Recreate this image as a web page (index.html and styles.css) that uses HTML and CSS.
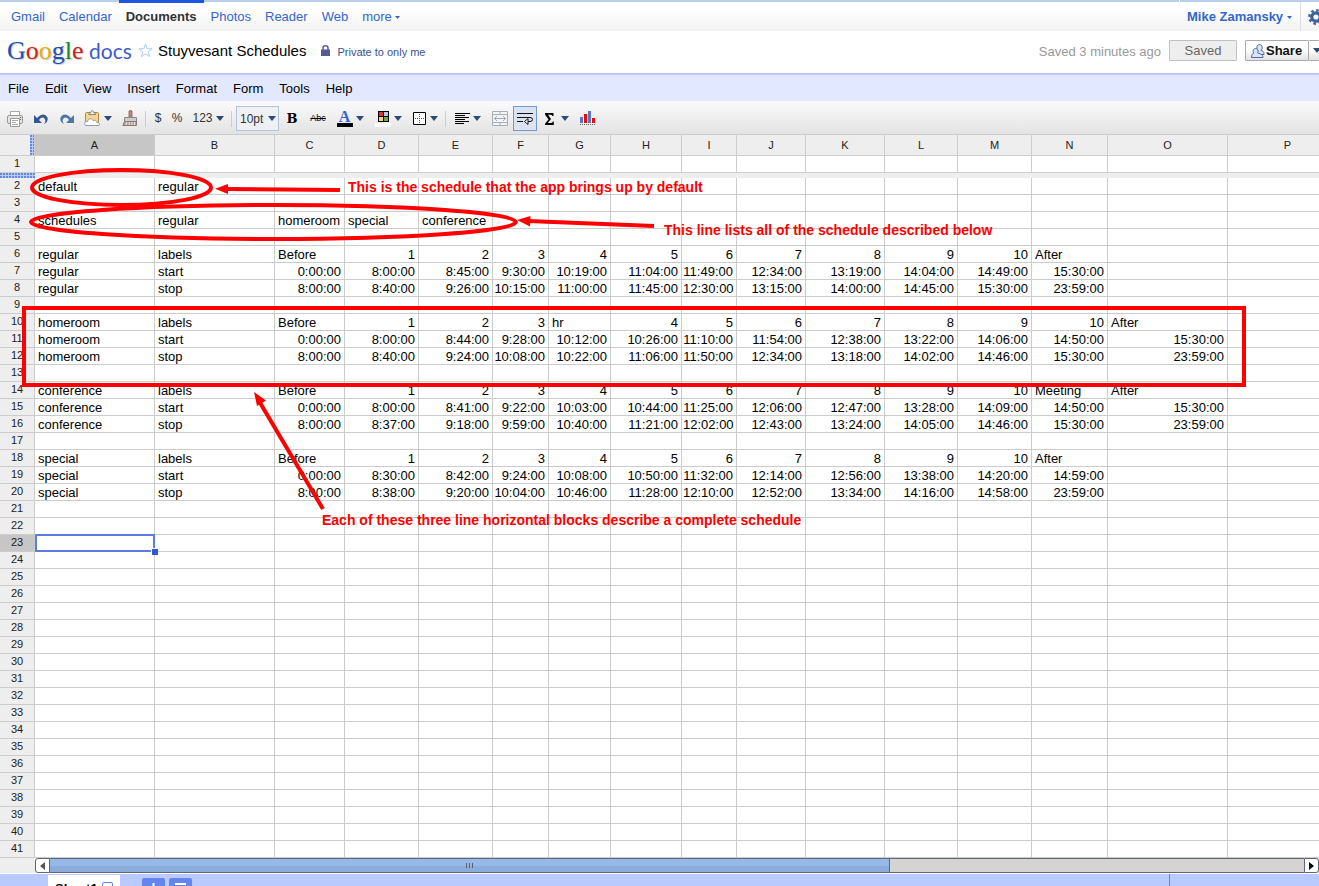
FILE: index.html
```html
<!DOCTYPE html>
<html lang="en">
<head>
<meta charset="utf-8">
<title>Stuyvesant Schedules - Google Docs</title>
<link rel="stylesheet" href="styles.css">
</head>
<body>
<nav class="topbar">
  <div class="topbar-links">
    <a href="#">Gmail</a>
    <a href="#">Calendar</a>
    <a href="#" class="current">Documents</a>
    <a href="#">Photos</a>
    <a href="#">Reader</a>
    <a href="#">Web</a>
    <a href="#">more <svg class="mini-caret" viewBox="0 0 5 3"><path d="M0 0h5L2.500 3z"/></svg></a>
  </div>
  <div class="topbar-user">
    <a href="#" class="user">Mike Zamansky <svg class="mini-caret" viewBox="0 0 5 3"><path d="M0 0h5L2.500 3z"/></svg></a>
    <button class="gear" aria-label="Settings">
      <svg width="16" height="16" viewBox="0 0 16 16"><circle cx="8" cy="8" r="4.200" fill="none" stroke="#3b5f9f" stroke-width="3.200"/><circle cx="8" cy="8" r="6.700" fill="none" stroke="#3b5f9f" stroke-width="2.400" stroke-dasharray="2.600 2.660"/></svg>
    </button>
  </div>
</nav>

<header class="titlebar">
  <a href="#" class="logo" aria-label="Google docs"><span class="google"><span class="blue">G</span><span class="red">o</span><span class="yellow">o</span><span class="blue">g</span><span class="green">l</span><span class="red">e</span></span><span class="docs">docs</span></a>
  <button class="star" aria-label="Star"><svg width="15" height="15" viewBox="0 0 15 15"><path d="M7.500 1l1.700 4.700 4.900.1-3.900 3 1.400 4.900-4.100-2.900-4.100 2.900 1.400-4.900-3.900-3 4.900-.1z" fill="#fff" stroke="#a9cdf6"/></svg></button>
  <h1 class="doc-title">Stuyvesant Schedules</h1>
  <svg class="lock" width="9" height="11" viewBox="0 0 9 11"><path d="M2 5V3a2.500 2.200 0 0 1 5 0v2" fill="none" stroke="#585a94" stroke-width="1.500"/><rect y="4.500" width="9" height="6.500" fill="#585a94"/></svg>
  <span class="privacy">Private to only me</span>
  <span class="saved-note">Saved 3 minutes ago</span>
  <button class="btn saved">Saved</button>
  <button class="btn share"><svg width="14" height="16" viewBox="0 0 14 16"><g fill="#dbe3f4" stroke="#4c69a8"><path d="M4.500 11.500c0-3 1-3.500 2.500-4-2-1.500-1.500-6 1.500-6s3.500 4.500 1.500 6c2 .5 3 1 3 4z"/><path d="M.5 14.500c0-3 1-4 2.500-4.500-2-2-.5-4.500 1.500-4.500S8 8 6.500 10c2 .5 5.500 1 5.500 4.500z"/></g></svg>Share</button>
  <button class="btn share-menu" aria-label="Share options"><svg class="caret" viewBox="0 0 8 5"><path d="M0 0h8L4 5z"/></svg></button>
</header>

<nav class="menubar">
  <a href="#">File</a><a href="#">Edit</a><a href="#">View</a><a href="#">Insert</a><a href="#">Format</a><a href="#">Form</a><a href="#">Tools</a><a href="#">Help</a>
</nav>

<div class="toolbar" role="toolbar">
  <button class="tool w26" aria-label="Print"><svg width="16" height="16" viewBox="0 0 16 16"><rect x="3.500" y=".5" width="9" height="5" fill="#fff" stroke="#aaa"/><rect x=".5" y="4.500" width="15" height="8" rx="1.500" fill="#e6e6e6" stroke="#999"/><path d="M3.500 7.500h9v8h-9z" fill="#fff" stroke="#999"/><path d="M5 9.500h6M5 11.500h4M5 13.500h6" stroke="#aaa"/><path d="M13 6h1v1h-1z" fill="#e33"/><path d="M13 8h1v1h-1z" fill="#3a3"/></svg></button>
  <button class="tool w26" aria-label="Undo"><svg width="16" height="12" viewBox="0 0 16 12"><path d="M1 2v8h8L6 7q3-4 5.500-1.500Q13.500 8 11 11q4.500-2 3.500-6.500Q11-1.500 4 5z" fill="#33588f"/></svg></button>
  <button class="tool w26" aria-label="Redo"><svg width="16" height="12" viewBox="0 0 16 12"><path d="M15 2v8H7l3-3Q7 3 4.500 5.500 2.500 8 5 11 .5 9 1.500 4.500 5-1.500 12 5z" fill="#4f75a6"/></svg></button>
  <button class="tool w36" aria-label="Paste"><svg width="17" height="17" viewBox="0 0 17 17"><rect x="1.500" y="2.500" width="13" height="12" rx="1" fill="#fbd68a" stroke="#b8863b"/><path d="M4.500 4.500c0-1 1-1.500 2-1.500 0-3 3.500-3 3.500 0 1 0 2 .5 2 1.500z" fill="#eee" stroke="#888"/><path d="M1.500 15.500c-2-2.500 0-4.500 2-3.800 .5-3.700 4.500-3.700 5.500-1.200 2-1 4 .2 3.800 2 3 0 3.200 2 2.200 3z" fill="#fff" stroke="#8d97ad"/></svg><svg class="caret" viewBox="0 0 8 5"><path d="M0 0h8L4 5z"/></svg></button>
  <button class="tool w28" aria-label="Paint format"><svg width="16" height="17" viewBox="0 0 16 17"><path d="M7 1q1.500-1 3 0v7H7z" fill="#c08a76" stroke="#8b5c4c" stroke-width=".8"/><path d="M2.500 7.500h12v4h-12z" fill="#ccc" stroke="#888"/><path d="M2.500 11.500L.8 15.500h13.700v-4z" fill="#b3a79a" stroke="#877"/><path d="M4 15l1-3M7 15l.5-3M10 15v-3M12.500 15v-3" stroke="#e8e3dc"/></svg></button>
  <span class="sep"></span>
  <button class="tool w20">$</button>
  <button class="tool w18">%</button>
  <button class="tool w44"><span>123</span><svg class="caret" viewBox="0 0 8 5"><path d="M0 0h8L4 5z"/></svg></button>
  <span class="sep"></span>
  <label class="font-size"><select aria-label="Font size"><option>10pt</option></select><svg class="caret" viewBox="0 0 8 5"><path d="M0 0h8L4 5z"/></svg></label>
  <button class="tool w26 bold">B</button>
  <button class="tool w26 strike">Abc</button>
  <button class="tool w38" aria-label="Text color"><span class="swatch"><span class="letter">A</span><span class="bar black"></span></span><svg class="caret" viewBox="0 0 8 5"><path d="M0 0h8L4 5z"/></svg></button>
  <button class="tool w38" aria-label="Fill color"><svg width="16" height="16" viewBox="0 0 16 16"><path d="M3 0h11v11H3z" fill="#000"/><path d="M4 1h4v4H4z" fill="#d33"/><path d="M9 1h4v4H9z" fill="#a9cdec"/><path d="M4 6h4v4H4z" fill="#fbd95c"/><path d="M9 6h4v4H9z" fill="#6aa84f"/><path d="M0 12h16v4H0z" fill="#fff"/></svg><svg class="caret" viewBox="0 0 8 5"><path d="M0 0h8L4 5z"/></svg></button>
  <button class="tool w37" aria-label="Borders"><svg width="14" height="14" viewBox="0 0 14 14"><path d="M.5 .5h12v12H.5z" fill="#fff" stroke="#000"/><path d="M6.500 2v10M2 6.500h10" stroke="#555" stroke-dasharray="1 1"/></svg><svg class="caret" viewBox="0 0 8 5"><path d="M0 0h8L4 5z"/></svg></button>
  <span class="sep"></span>
  <button class="tool w39" aria-label="Align"><svg width="15" height="11" viewBox="0 0 15 11"><path d="M0 .5h15M0 2.500h10M0 4.500h14M0 6.500h10M0 8.500h14M0 10.500h9" stroke="#000"/></svg><svg class="caret" viewBox="0 0 8 5"><path d="M0 0h8L4 5z"/></svg></button>
  <button class="tool w25" aria-label="Merge"><svg width="16" height="15" viewBox="0 0 16 15"><path d="M.5 .5h15v14H.5zM.5 3.500h15M.5 11.500h15M8 .5v3M8 11.500v3" fill="#f3f4f8" stroke="#a9adb8"/><path d="M2.500 7.500h11M5 5L2.500 7.500 5 10M11 5l2.500 2.500L11 10" fill="none" stroke="#9ab"/></svg></button>
  <button class="tool w24 pressed" aria-label="Wrap text" aria-pressed="true"><svg width="16" height="12" viewBox="0 0 16 12"><path d="M0 .5h16M0 4.500h13q2.500 0 2.500 2T13 8.500h-2M0 8.500h6" fill="none" stroke="#111"/><path d="M11 5.500v6L7.500 8.500z" fill="#fff" stroke="#111"/></svg></button>
  <button class="tool w40" aria-label="Functions"><svg width="9" height="12" viewBox="0 0 9 12"><path d="M0 0h8.500v3H7.500Q7 1.700 5 1.700H3L6 6l-3.300 4H5.500q2 0 2.500-1.500h.8V12H0v-1.200L3.500 6.500 0 1.500z" fill="#000"/></svg><span class="spacer"></span><svg class="caret" viewBox="0 0 8 5"><path d="M0 0h8L4 5z"/></svg></button>
  <button class="tool w22" aria-label="Insert chart"><svg width="16" height="15" viewBox="0 0 16 15"><path d="M0 6h3v6H0zM8 0h3v12H8z" fill="#5577cc"/><path d="M4 3h3v9H4zM12 7h3v5h-3z" fill="#f00"/><path d="M0 13.500h16" stroke="#666" stroke-dasharray="1 1"/></svg></button>
</div>

<main class="sheet">
  <table class="grid">
    <colgroup>
      <col class="c35"><col class="c120"><col class="c120"><col class="c70"><col class="c74"><col class="c74"><col class="c56"><col class="c62"><col class="c71"><col class="c55"><col class="c69"><col class="c79"><col class="c73"><col class="c74"><col class="c76"><col class="c120"><col class="c120">
    </colgroup>
    <thead><tr id="letters"><th class="corner"></th></tr></thead>
    <tbody id="rows"></tbody>
  </table>
  <svg class="marks" width="1319" height="724" viewBox="0 134 1319 724">
    <g fill="none" stroke="#f00" stroke-width="4">
      <ellipse cx="121.500" cy="187.500" rx="89.500" ry="17.500"/>
      <ellipse cx="273.500" cy="222" rx="242.500" ry="17"/>
      <rect x="24" y="308" width="1220" height="77"/>
      <path d="M340 190L226 189M654 226L528 221M323 509L259 401"/>
    </g>
    <path d="M215 188.700L228 184v10zM517 220L530.500 216l-.5 10.500zM254 392l12 8.500-9 5.500z" fill="#f00"/>
  </svg>
  <p class="note note-default">This is the schedule that the app brings up by default</p>
  <p class="note note-list">This line lists all of the schedule described below</p>
  <p class="note note-block">Each of these three line horizontal blocks describe a complete schedule</p>
</main>

<div class="hscroll">
  <span class="scroll-pad"></span>
  <button class="scroll-btn left" aria-label="Scroll left"><svg width="5" height="8" viewBox="0 0 5 8"><path d="M5 0v8L0 4z" fill="#555"/></svg></button>
  <div class="track"><div class="thumb"><i></i><i></i><i></i></div></div>
  <button class="scroll-btn right" aria-label="Scroll right"><svg width="5" height="8" viewBox="0 0 5 8"><path d="M0 0v8l5-4z" fill="#000"/></svg></button>
</div>

<footer class="tabs">
  <button class="tab">Sheet1<span class="tab-menu"></span></button>
  <button class="tab-btn" aria-label="Add sheet"><svg width="11" height="11" viewBox="0 0 11 11"><path d="M5.500 0v11M0 5.500h11" stroke="#fff" stroke-width="2"/></svg></button>
  <button class="tab-btn" aria-label="All sheets"><svg width="11" height="11" viewBox="0 0 11 11"><path d="M0 1h11M0 5h11M0 9h11" stroke="#fff" stroke-width="2"/></svg></button>
  <span class="tabs-divider"></span>
</footer>
<script src="sheet.js"></script>
</body>
</html>
```
FILE: styles.css
```css
* { box-sizing: border-box; }
html { overflow: hidden; }
body { margin: 0; font: 13px/15px "Liberation Sans", Arial, sans-serif; color: #000; background: #fff; }
a { color: #36c; text-decoration: none; }
button { margin: 0; padding: 0; border: 0; background: none; font: inherit; color: inherit; }
svg { display: block; flex: none; }
.caret { width: 8px; height: 5px; fill: #2c4a7c; }
.mini-caret { display: inline-block; width: 5px; height: 3px; fill: #36c; vertical-align: middle; }

.topbar { display: flex; justify-content: space-between; height: 31px; background: linear-gradient(#fff 30%, #f3f3f3); }
.topbar-links { display: flex; flex: 1; padding-left: 4px; border-top: 2px solid #b8d0ec; }
.topbar-links a { padding: 7px 7px 0; }
.topbar-links .current { margin-top: -2px; padding-top: 6px; border-top: 3px solid #1c56e0; font-weight: bold; color: #333; }
.topbar-user { display: flex; width: 139px; margin-left: 1px; overflow: hidden; border-top: 2px solid #b8d0ec; }
.user { flex: none; width: 121px; padding: 7px 0 0 7px; border-right: 1px solid #ddd; font-weight: bold; }
.gear { flex: none; padding: 0 0 0 7px; }

.titlebar { display: flex; align-items: center; height: 42px; overflow: hidden; padding: 0 0 3px 7px; white-space: nowrap; }
.logo { display: flex; align-items: baseline; width: 131px; line-height: 30px; }
.google { width: 82px; font-family: "Liberation Serif", serif; font-size: 26px; text-shadow: 1px 1px 1px #ccc; }
.docs { font-family: Lato, sans-serif; font-size: 21px; color: #3a5ccc; }
.blue { color: #1f4fb8; }
.red { color: #d0201c; }
.yellow { color: #e5ad0c; }
.green { color: #178a2c; }
.star { width: 20px; }
.doc-title { margin: 0; font-size: 15px; line-height: 18px; font-weight: normal; }
.lock { margin-left: 15px; }
.privacy { margin-left: 7px; padding-top: 3px; font-size: 11px; color: #39528f; }
.saved-note { margin-left: auto; padding-top: 2px; color: #999; }
.btn { flex: none; height: 21px; border: 1px solid #c0c0c0; border-radius: 1px; }
.saved { width: 68px; margin-left: 8px; background: #eee; color: #666; }
.share { display: flex; align-items: center; gap: 1px; width: 64px; margin-left: 8px; padding-left: 5px; background: linear-gradient(#fcfcfc 50%, #e2e2e2); border-color: #aaa; font-weight: bold; color: #111; }
.share-menu { width: 10px; padding-left: 4px; overflow: hidden; background: linear-gradient(#fcfcfc 50%, #e2e2e2); border-color: #aaa; border-left: 0; border-right: 0; }

.menubar { display: flex; gap: 16px; height: 28px; padding: 6px 8px 0; border-top: 2px solid #b7c9fa; background: #e1e8ff; }
.menubar a { color: #000; }

.toolbar { display: flex; align-items: center; height: 33px; padding: 2px 0 0 2px; background: linear-gradient(#fbfbfb, #e3e3e3); color: #333; font-size: 12px; }
.tool { display: flex; flex: none; align-items: center; justify-content: center; gap: 3px; height: 25px; }
.w18 { width: 18px; }
.w20 { width: 20px; }
.w22 { width: 22px; }
.w24 { width: 24px; }
.w25 { width: 25px; }
.w26 { width: 26px; }
.w28 { width: 28px; }
.w36 { width: 36px; }
.w37 { width: 37px; }
.w38 { width: 38px; }
.w39 { width: 39px; }
.w40 { width: 40px; }
.w44 { width: 44px; }
.spacer { width: 1px; }
.sep { flex: none; width: 1px; height: 16px; margin: 0 2px 0 1px; background: #ccc; }
.font-size { position: relative; margin-left: 2px; }
.font-size select { display: block; width: 43px; height: 25px; padding: 1px 0 0 3px; border: 1px solid #b4c4dc; background: #eef0f3; appearance: none; font: 12px "Liberation Sans", Arial, sans-serif; color: #333; }
.font-size .caret { position: absolute; right: 3px; top: 10px; pointer-events: none; }
.bold { font: bold 13px "DejaVu Serif", serif; color: #000; }
.strike { font-size: 9px; color: #000; text-decoration: line-through; }
.swatch { display: block; width: 16px; text-align: center; }
.letter { display: block; font: bold 16px/13px "Liberation Serif", serif; color: #36c; }
.bar { display: block; height: 4px; }
.black { background: #000; }
.pressed { margin: 0 0 0 1px; border: 1px solid #6f9ad3; background: #dce3f0; }

.sheet { position: relative; overflow: hidden; border-top: 1px solid #ccc; }
.grid { width: 1348px; table-layout: fixed; border-collapse: separate; border-spacing: 0; }
.c35 { width: 35px; }
.c55 { width: 55px; }
.c56 { width: 56px; }
.c62 { width: 62px; }
.c69 { width: 69px; }
.c70 { width: 70px; }
.c71 { width: 71px; }
.c73 { width: 73px; }
.c74 { width: 74px; }
.c76 { width: 76px; }
.c79 { width: 79px; }
.c120 { width: 120px; }
.grid th { padding: 0; border: solid #ccc; border-width: 0 1px 1px 0; background: #eee; font-size: 11px; font-weight: normal; color: #222; }
.grid thead th { height: 21px; line-height: 20px; }
.grid tbody th { height: 17px; line-height: 14px; padding-bottom: 2px; }
.grid td { height: 17px; padding: 1px 3px 0; border: solid #ccc; border-width: 0 1px 1px 0; line-height: 15px; white-space: nowrap; }
.grid .num { padding-left: 1px; text-align: right; }
.grid .active { background: #c6c6c6; }
.grid thead .corner { background: linear-gradient(to right, #eee 30px, transparent 30px), radial-gradient(circle at 1px 1px, #6487e6 1px, #b8caff 1px) 0 0 / 3px 3px; }
.grid .freeze td { height: 5px; padding: 0; border: 0; background: #eee; }
.grid .freeze .handle { background: radial-gradient(circle at 1px 1px, #6487e6 1px, #b8caff 1px) 0 0 / 3px 3px; }
.grid .selected { position: relative; }
.selected::before { content: ""; position: absolute; inset: -1px -1px -1px 0; border: 2px solid #5b7ce0; }
.selected::after { content: ""; position: absolute; right: -4px; bottom: -4px; width: 6px; height: 6px; border: solid #fff; border-width: 1px 0 0 1px; background: #2e5bc8; }

.marks { position: absolute; left: 0; top: -1px; }
.note { position: absolute; margin: 0; font-size: 14px; line-height: 16px; font-weight: bold; color: #f00; white-space: nowrap; }
.note-default { left: 348px; top: 44px; }
.note-list { left: 664px; top: 87px; }
.note-block { left: 322px; top: 377px; }

.hscroll { display: flex; height: 15px; background: #eee; }
.scroll-pad { width: 35px; }
.scroll-btn { display: flex; align-items: center; justify-content: center; width: 15px; border: 1px solid #616574; background: #fff; }
.left { border-radius: 3px 0 0 3px; }
.right { border-radius: 0 3px 3px 0; }
.track { flex: 1; border: solid #616574; border-width: 1px 0; background: #d5d4d2; }
.thumb { display: flex; justify-content: center; align-items: center; gap: 2px; width: 67%; height: 13px; border-right: 1px solid #616574; background: linear-gradient(#97b9e8 55%, #8aaddb 55%); }
.thumb i { width: 1px; height: 5px; background: #555e75; }

.tabs { display: flex; align-items: flex-start; height: 30px; margin-top: 1px; padding-left: 48px; background: #b8caff; }
.tab { display: flex; gap: 4px; width: 72px; height: 28px; margin: 1px 22px 0 0; padding: 6px 7px 0; background: #fff; font-weight: bold; }
.tab-menu { width: 12px; height: 12px; margin-top: 1px; border: 1px solid #6485ec; border-radius: 2px; }
.tab-btn { display: flex; justify-content: center; width: 23px; height: 20px; margin: 4px 4px 0 0; padding-top: 5px; border-radius: 2px; background: #6485ec; }
.tabs-divider { width: 1px; height: 30px; margin: 0 149px 0 auto; background: #6485ec; }
```
FILE: sheet.js
```js
const LETTERS = "ABCDEFGHIJKLMNOP".split("");
const ROW_COUNT = 41;
const ACTIVE_ROW = 23;

const DATA = {
  2: "default|regular",
  4: "schedules|regular|homeroom|special|conference",
  6: "regular|labels|Before|1|2|3|4|5|6|7|8|9|10|After",
  7: "regular|start|0:00:00|8:00:00|8:45:00|9:30:00|10:19:00|11:04:00|11:49:00|12:34:00|13:19:00|14:04:00|14:49:00|15:30:00",
  8: "regular|stop|8:00:00|8:40:00|9:26:00|10:15:00|11:00:00|11:45:00|12:30:00|13:15:00|14:00:00|14:45:00|15:30:00|23:59:00",
  10: "homeroom|labels|Before|1|2|3|hr|4|5|6|7|8|9|10|After",
  11: "homeroom|start|0:00:00|8:00:00|8:44:00|9:28:00|10:12:00|10:26:00|11:10:00|11:54:00|12:38:00|13:22:00|14:06:00|14:50:00|15:30:00",
  12: "homeroom|stop|8:00:00|8:40:00|9:24:00|10:08:00|10:22:00|11:06:00|11:50:00|12:34:00|13:18:00|14:02:00|14:46:00|15:30:00|23:59:00",
  14: "conference|labels|Before|1|2|3|4|5|6|7|8|9|10|Meeting|After",
  15: "conference|start|0:00:00|8:00:00|8:41:00|9:22:00|10:03:00|10:44:00|11:25:00|12:06:00|12:47:00|13:28:00|14:09:00|14:50:00|15:30:00",
  16: "conference|stop|8:00:00|8:37:00|9:18:00|9:59:00|10:40:00|11:21:00|12:02:00|12:43:00|13:24:00|14:05:00|14:46:00|15:30:00|23:59:00",
  18: "special|labels|Before|1|2|3|4|5|6|7|8|9|10|After",
  19: "special|start|0:00:00|8:30:00|8:42:00|9:24:00|10:08:00|10:50:00|11:32:00|12:14:00|12:56:00|13:38:00|14:20:00|14:59:00",
  20: "special|stop|8:00:00|8:38:00|9:20:00|10:04:00|10:46:00|11:28:00|12:10:00|12:52:00|13:34:00|14:16:00|14:58:00|23:59:00"
};

function cell(tag, text, className) {
  const el = document.createElement(tag);
  if (text) el.textContent = text;
  if (className) el.className = className;
  return el;
}

const letters = document.getElementById("letters");
LETTERS.forEach((letter, i) => letters.append(cell("th", letter, i === 0 ? "active" : "")));

const body = document.getElementById("rows");
for (let n = 1; n <= ROW_COUNT; n++) {
  const row = document.createElement("tr");
  row.append(cell("th", String(n), n === ACTIVE_ROW ? "active" : ""));
  const values = (DATA[n] || "").split("|");
  LETTERS.forEach((_, i) => {
    const value = values[i] || "";
    const isSelected = n === ACTIVE_ROW && i === 0;
    row.append(cell("td", value, isSelected ? "selected" : /^\d/.test(value) ? "num" : ""));
  });
  body.append(row);

  if (n === 1) {
    const freeze = cell("tr", "", "freeze");
    freeze.append(cell("td", "", "handle"));
    const bar = cell("td");
    bar.colSpan = LETTERS.length;
    freeze.append(bar);
    body.append(freeze);
  }
}
```
